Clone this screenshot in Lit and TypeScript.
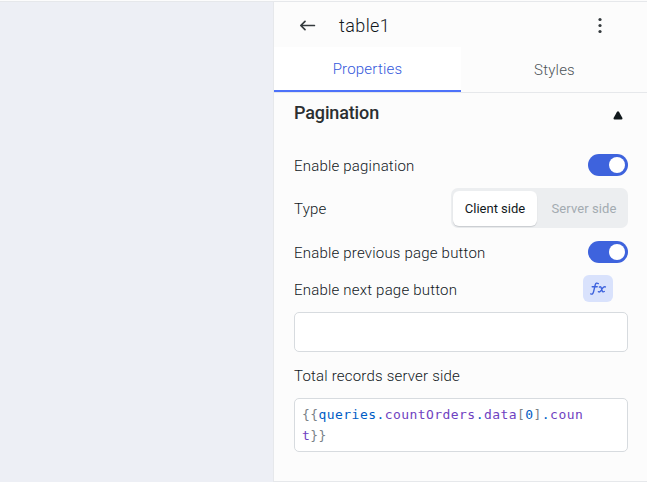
import { LitElement, html, css } from "lit";
import { customElement, property } from "lit/decorators.js";

@customElement("toggle-switch")
class ToggleSwitch extends LitElement {
  @property({ type: Boolean }) on = false;
  static styles = css`
    :host { display: block; }
    .track {
      display: flex; align-items: center; box-sizing: border-box;
      width: 40px; height: 22px; padding: 0 3px; border-radius: 11px; background: #c1c8cd;
    }
    .track.on { justify-content: flex-end; background: #3e63dd; }
    .knob { width: 16px; height: 16px; border-radius: 50%; background: #fff; }
  `;
  render() {
    return html`<div class="track ${this.on ? "on" : ""}"><div class="knob"></div></div>`;
  }
}

@customElement("app-root")
class AppRoot extends LitElement {
  static styles = css`
    :host {
      display: block; width: 647px; height: 482px; overflow: hidden;
      font-family: Roboto, "Liberation Sans", sans-serif; color: #11181c;
    }
    * { box-sizing: border-box; }
    .app { display: flex; height: 482px; border-top: 1px solid #fcfcfc; }
    .canvas { width: 273px; background: #edeff5; border-top: 1px solid #e6e8eb; }
    .panel {
      flex: 1; display: flex; flex-direction: column; background: #fcfcfc;
      border: solid #e6e8eb; border-width: 1px 0 1px 1px;
    }
    .head { display: flex; align-items: center; height: 45px; padding: 0 40px 0 24px; }
    .head .name { margin-left: 22px; flex: 1; font-size: 18px; font-weight: 300; line-height: 24px; letter-spacing: .4px; padding-top: 3px; }
    .head svg { display: block; margin-top: 3px; }
    .tabs { display: flex; height: 46px; border-bottom: 1px solid #e6e8eb; }
    .tab { flex: 1; text-align: center; font-size: 15px; font-weight: 300; letter-spacing: .2px; line-height: 46px; color: #4c5459; padding-left: 1px; }
    .tab.active { flex: none; width: 187px; height: 45px; line-height: 45px; background: #fff; color: #3458dc; border-bottom: 2px solid #4d72fa; padding-left: 0; }
    .section { padding: 0 19px 0 20px; }
    .title { display: flex; align-items: center; justify-content: space-between; height: 38px; font-size: 18px; font-weight: 500; letter-spacing: -.14px; color: #2b2f31; }
    .title svg { margin: 7px 5px 0 0; }
    .row { display: flex; align-items: center; justify-content: space-between; font-size: 15px; font-weight: 300; letter-spacing: .2px; }
    .label { padding-top: 2px; }
    .r1 { height: 40px; margin-top: 14px; }
    .r2 { height: 40px; margin-top: 3px; }
    .r3 { height: 40px; margin-top: 4px; }
    .r4 { height: 32px; padding-right: 15px; }
    .r4 .label { padding-top: 4px; }
    .r5 { height: 34px; margin-top: 7px; }
    .r5 .label { padding-top: 0; }
    .segments { display: flex; align-items: center; width: 177px; height: 40px; padding: 2px; border-radius: 7px; background: #eceef0; font-size: 13px; font-weight: 400; }
    .segment { flex: 1; text-align: center; line-height: 35px; color: #a3abb1; letter-spacing: .08px; padding-left: 5px; }
    .segment.selected { flex: none; width: 84px; height: 35px; border-radius: 6px; background: #fff; color: #11181c; letter-spacing: 0; box-shadow: 0 1px 1px rgba(16, 24, 40, .16); padding: 0; }
    .fx { width: 30px; height: 27px; border-radius: 6px; background: #d9e2fc; display: flex; align-items: center; justify-content: center; }
    .field { border: 1px solid #d7dbdf; border-radius: 5px; background: #fff; }
    .empty { height: 40px; margin-top: 8px; }
    .code {
      height: 54px; margin-top: 5px; padding: 5px 36px 0 7px; word-break: break-all; color: #7a8288;
      font: 13px/21px "DejaVu Sans Mono", "Liberation Mono", monospace; letter-spacing: .44px;
    }
    .var { color: #005cc5; }
    .prop { color: #6f42c1; }
  `;
  render() {
    return html`
      <div class="app">
        <div class="canvas"></div>
        <div class="panel">
          <div class="head">
            <svg width="19" height="16" viewBox="0 0 19 16" fill="none" stroke="#343a3d" stroke-width="1.7" stroke-linecap="round" stroke-linejoin="round"><path d="M16.4 7.5H3M7 3.3L2.8 7.5L7 11.7" /></svg>
            <div class="name">table1</div>
            <svg width="14" height="18" viewBox="0 0 14 18" fill="#343a3d"><circle cx="7" cy="2.5" r="1.6" /><circle cx="7" cy="8.5" r="1.6" /><circle cx="7" cy="14.5" r="1.6" /></svg>
          </div>
          <div class="tabs"><div class="tab active">Properties</div><div class="tab">Styles</div></div>
          <div class="section">
            <div class="title">Pagination
              <svg width="10" height="9" viewBox="0 0 10 9" fill="#11181c"><path d="M3.9 1Q5-.4 6.1 1L9.3 6.8Q9.9 8.4 8.4 8.5H1.6Q.1 8.4.7 6.8Z" /></svg>
            </div>
            <div class="row r1"><div class="label">Enable pagination</div><toggle-switch on></toggle-switch></div>
            <div class="row r2"><div class="label">Type</div>
              <div class="segments"><div class="segment selected">Client side</div><div class="segment">Server side</div></div>
            </div>
            <div class="row r3"><div class="label">Enable previous page button</div><toggle-switch on></toggle-switch></div>
            <div class="row r4"><div class="label">Enable next page button</div>
              <div class="fx"><svg width="18" height="16" viewBox="0 0 18 16" fill="none" stroke="#3e63dd" stroke-width="1.4" stroke-linecap="round"><path d="M9.3 3.6Q7 2.1 6.2 5L4.6 11.7Q3.9 14.9 1.7 13.9M3.2 6.7H8.2M10.4 7.1Q11.8 6.1 12.3 8L13 10.5Q13.6 12.5 15.3 11.5M16.4 6.9Q15 6.1 13.8 7.9L11.8 10.8Q10.6 12.5 9.4 11.7" /></svg></div>
            </div>
            <div class="field empty"></div>
            <div class="row r5"><div class="label">Total records server side</div></div>
            <div class="field code">{{<span class="var">queries.</span><span class="prop">countOrders</span><span class="var">.</span><span class="prop">data</span>[<span class="var">0</span>]<span class="var">.</span><span class="prop">count</span>}}</div>
          </div>
        </div>
      </div>`;
  }
}
